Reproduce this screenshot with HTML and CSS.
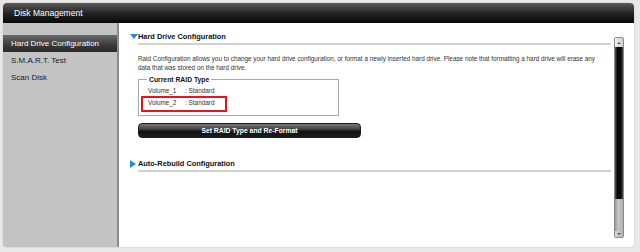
FILE: index.html
```html
<!DOCTYPE html>
<html lang="en">

<head>
    <meta charset="UTF-8">
    <title>Disk Management</title>
    <link rel="stylesheet" href="styles.css">
</head>

<body>
    <div class="window">
        <div class="title-bar">Disk Management</div>

        <div class="window-body">
            <div class="sidebar">
                <div class="nav-item active">Hard Drive Configuration</div>
                <div class="nav-item">S.M.A.R.T. Test</div>
                <div class="nav-item">Scan Disk</div>
            </div>

            <div class="content">
                <div class="main">
                    <div class="sec-head">
                        <span class="tri tri-down"></span>
                        <div class="sec-title">Hard Drive Configuration</div>
                    </div>
                    <div class="sec-body">
                        <p class="desc">Raid Configuration allows you to change your hard drive configuration, or format a newly inserted hard drive. Please note that formatting a hard drive will erase any data that was stored on the hard drive.</p>

                        <fieldset class="raid-box">
                            <legend>Current RAID Type</legend>
                            <div class="vol-list">
                                <div class="vol-row"><span class="vol-name">Volume_1</span>: Standard</div>
                                <div class="vol-row marked"><span class="vol-name">Volume_2</span>: Standard</div>
                            </div>
                        </fieldset>

                        <button class="dark-btn">Set RAID Type and Re-Format</button>
                    </div>

                    <div class="sec-head second">
                        <span class="tri tri-right"></span>
                        <div class="sec-title">Auto-Rebuild Configuration</div>
                    </div>
                </div>

                <div class="scrollbar">
                    <div class="sb-btn"><span class="sb-arrow up"></span></div>
                    <div class="sb-thumb"></div>
                    <div class="sb-track"></div>
                    <div class="sb-btn bottom"><span class="sb-arrow down"></span></div>
                </div>
            </div>
        </div>
    </div>
</body>

</html>
```

FILE: styles.css
```css
body {
    margin: 0;
    background-color: #e8e8e8;
    font-family: "Liberation Sans", Arial, sans-serif;
    color: #222;
}

.window {
    margin: 3px;
    width: 631px;
    height: 244px;
    display: flex;
    flex-direction: column;
    border-radius: 4px;
    overflow: hidden;
    box-shadow: 0 0 1px rgba(0, 0, 0, 0.5);
}

.title-bar {
    height: 20px;
    line-height: 20px;
    padding-left: 11px;
    font-size: 8.5px;
    color: #fff;
    background: linear-gradient(#5a5a5a, #252525 50%, #080808);
    border-radius: 4px 4px 0 0;
}

.window-body {
    flex: 1;
    display: flex;
}

/* left menu */
.sidebar {
    width: 114px;
    padding-top: 12px;
    background-color: #c3c3c3;
    border-right: 2px solid #8c8c8c;
}

.nav-item {
    height: 17px;
    line-height: 17px;
    padding-left: 8px;
    font-size: 8px;
    color: #1a1a1a;
}

.nav-item.active {
    color: #fff;
    background: linear-gradient(#6a6a6a, #3a3a3a 60%, #2a2a2a);
}

/* right panel */
.content {
    flex: 1;
    display: flex;
    background-color: #fff;
}

.main {
    flex: 1;
    padding: 9px 3px 0 11px;
}

.sec-head {
    display: flex;
    align-items: flex-start;
}

.sec-head.second {
    margin-top: 21px;
}

.tri {
    width: 8px;
    height: 10px;
    position: relative;
}

.tri-down::before {
    content: "";
    position: absolute;
    left: 0;
    top: 2px;
    border-left: 4px solid transparent;
    border-right: 4px solid transparent;
    border-top: 5px solid #1e8ae6;
}

.tri-right::before {
    content: "";
    position: absolute;
    left: 0;
    top: 1px;
    border-top: 4px solid transparent;
    border-bottom: 4px solid transparent;
    border-left: 6px solid #1e8ae6;
}

.sec-title {
    flex: 1;
    line-height: 10px;
    padding-bottom: 1px;
    font-size: 7.4px;
    font-weight: bold;
    color: #111;
    border-bottom: 2px solid #d2d2d2;
}

.sec-body {
    padding-left: 8px;
}

.desc {
    margin: 9px 0 0;
    max-width: 468px;
    font-size: 6.35px;
    line-height: 9px;
    color: #333;
}

.raid-box {
    width: 197px;
    margin: 3px 0 0;
    padding: 2px 0 3px 2px;
    border: 1px solid #a8a8a8;
}

.raid-box legend {
    margin-left: 6px;
    padding: 0 2px;
    font-size: 6.8px;
    line-height: 9px;
    font-weight: bold;
    color: #111;
}

.vol-row {
    width: 77px;
    padding: 0 0 0 5px;
    border: 2px solid transparent;
    border-top: 0;
    border-bottom: 0;
    font-size: 6.4px;
    line-height: 10px;
    color: #333;
}

.vol-row.marked {
    border: 2px solid #e8141b;
    line-height: 9px;
    padding-bottom: 3px;
}

.vol-name {
    display: inline-block;
    width: 37px;
}

.dark-btn {
    display: block;
    margin-top: 7px;
    width: 223px;
    height: 15px;
    padding: 0;
    border: 1px solid #1a1a1a;
    border-radius: 4px;
    background: linear-gradient(#7a7a7a, #3a3a3a 45%, #111 55%, #1c1c1c);
    color: #fff;
    font-family: "Liberation Sans", Arial, sans-serif;
    font-size: 6.8px;
    font-weight: bold;
}

/* fake scrollbar */
.scrollbar {
    width: 8px;
    margin: 14px 10px 9px 0;
    display: flex;
    flex-direction: column;
    border: 1px solid #8a8a8a;
    border-radius: 2px;
    background-color: #b8b8b8;
}

.sb-btn {
    height: 9px;
    background: linear-gradient(to right, #f0f0f0, #d0d0d0);
    display: flex;
    justify-content: center;
    align-items: center;
}

.sb-btn.bottom {
    height: 6px;
    background: linear-gradient(to right, #d8d8d8, #b0b0b0);
}

.sb-arrow {
    width: 0;
    height: 0;
    border-left: 2px solid transparent;
    border-right: 2px solid transparent;
}

.sb-arrow.up {
    border-bottom: 2px solid #555;
}

.sb-arrow.down {
    border-top: 2px solid #555;
}

.sb-thumb {
    height: 152px;
    background: linear-gradient(to right, #555, #0a0a0a 30%, #0a0a0a 70%, #444);
}

.sb-track {
    flex: 1;
    background: linear-gradient(to right, #9a9a9a, #c6c6c6 40%, #b0b0b0);
}
```
